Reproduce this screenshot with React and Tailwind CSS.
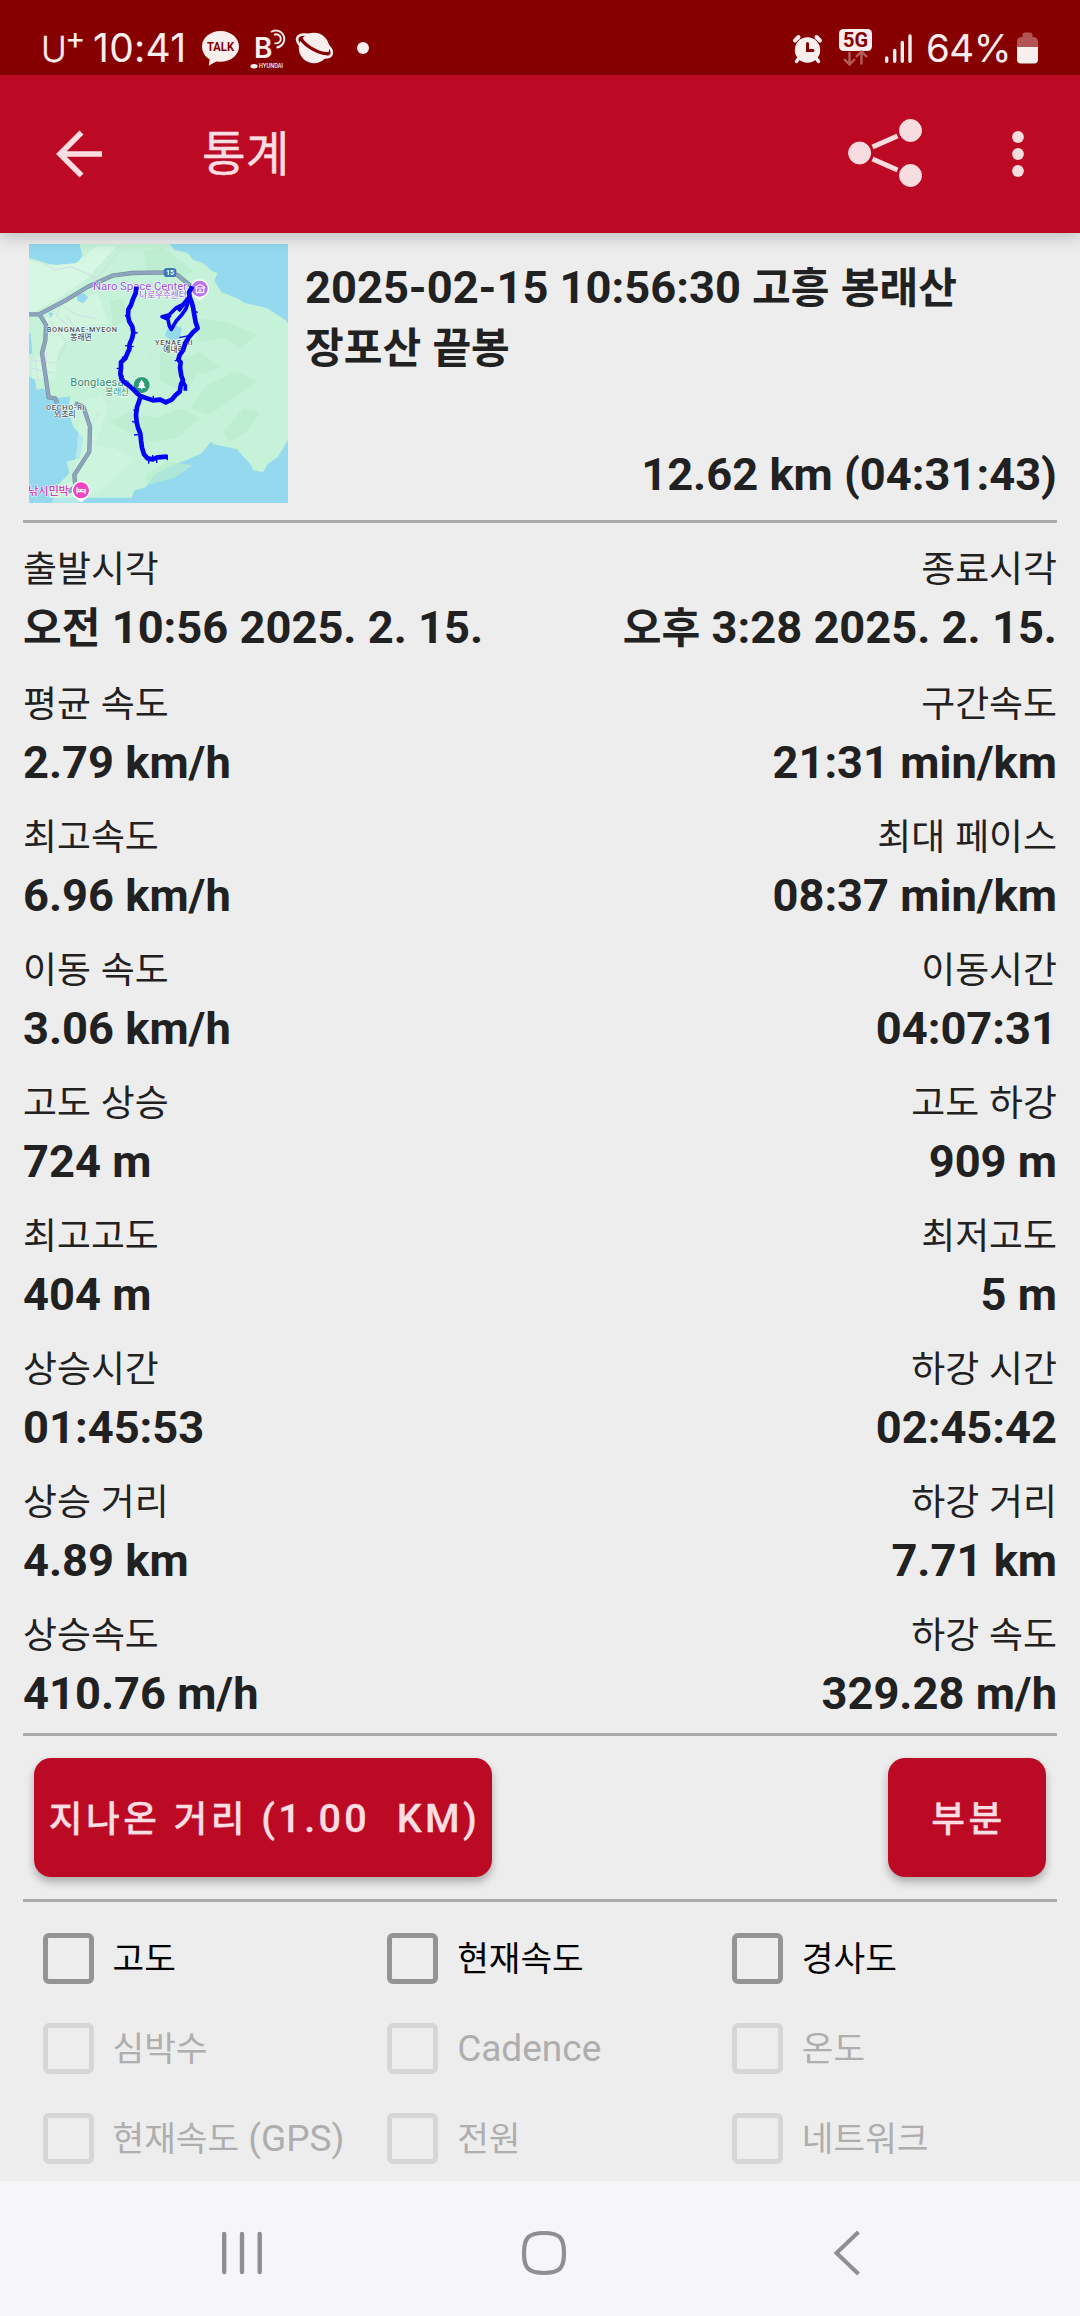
import React, { useState } from 'react';

const STATS = [
    [['출발시각', '오전 10:56 2025. 2. 15.'], ['종료시각', '오후 3:28 2025. 2. 15.']],
    [['평균 속도', '2.79 km/h'], ['구간속도', '21:31 min/km']],
    [['최고속도', '6.96 km/h'], ['최대 페이스', '08:37 min/km']],
    [['이동 속도', '3.06 km/h'], ['이동시간', '04:07:31']],
    [['고도 상승', '724 m'], ['고도 하강', '909 m']],
    [['최고고도', '404 m'], ['최저고도', '5 m']],
    [['상승시간', '01:45:53'], ['하강 시간', '02:45:42']],
    [['상승 거리', '4.89 km'], ['하강 거리', '7.71 km']],
    [['상승속도', '410.76 m/h'], ['하강 속도', '329.28 m/h']],
];

const OPTIONS = [
    { label: '고도', enabled: true },
    { label: '현재속도', enabled: true },
    { label: '경사도', enabled: true },
    { label: '심박수', enabled: false },
    { label: 'Cadence', enabled: false },
    { label: '온도', enabled: false },
    { label: '현재속도 (GPS)', enabled: false },
    { label: '전원', enabled: false },
    { label: '네트워크', enabled: false },
];

// Hangul glyphs run a little large next to Roboto, so they are set slightly smaller
const Txt = ({ children }) =>
    children.split(/([가-힣]+)/).map((part, i) =>
        /[가-힣]/.test(part) ? (
            <span key={i} className="text-[0.93em] leading-none">{part}</span>
        ) : (
            part
        )
    );

const StatusBar = () => (
    <div className="flex h-[75px] shrink-0 justify-between bg-[#870000] text-[#f8eeee]">
        <div className="flex pl-[41px]">
            <span className="w-[24px] pt-[30px] font-['Inter'] text-[35px] leading-[38px] font-light [-webkit-text-stroke:0.4px]">U</span>
            <span className="w-[28px] pt-[22px] font-['Inter'] text-[31px] leading-[32px]">+</span>
            <span className="w-[100px] pt-[28px] font-['Inter'] text-[39px] leading-[40px] tracking-[0.3px]">10:41</span>
            {/* Messenger */}
            <svg className="h-[75px] w-[48px]" viewBox="193 0 48 75" fill="currentColor">
                <path d="M220.500 31c-10.400 0-18.500 6.900-18.500 15.500 0 5.600 3.100 10.200 7.700 13l-1 6.200 7.500-4.300c1.400.3 2.800.4 4.300.4 10.400 0 18.500-6.700 18.500-15.300S230.900 31 220.500 31z" />
                <text x="220.500" y="51" textAnchor="middle" fontFamily="Roboto" fontWeight="700" fontSize="13.500" fill="#870000" textLength="27" lengthAdjust="spacingAndGlyphs">TALK</text>
            </svg>
            {/* Bluelink */}
            <svg className="h-[75px] w-[50px]" viewBox="241 0 50 75" fill="none" stroke="currentColor">
                <text x="254" y="57.500" fontFamily="Inter" fontWeight="600" fontSize="28" fill="currentColor" stroke="none">B</text>
                <path d="M271 32a8.500 8.500 0 1 1 5.500 15.500" strokeWidth="1.900" />
                <path d="M274 35a4.500 4.500 0 1 1 .5 8" strokeWidth="1.900" />
                <ellipse cx="254" cy="66.200" rx="3.500" ry="2.200" fill="currentColor" stroke="none" />
                <text x="259" y="68.300" fontFamily="Inter" fontWeight="600" fontSize="5.500" fill="currentColor" stroke="none" textLength="24" lengthAdjust="spacingAndGlyphs">HYUNDAI</text>
            </svg>
            {/* Planet */}
            <svg className="h-[75px] w-[50px]" viewBox="291 0 50 75" fill="none">
                <circle cx="314" cy="48" r="15.200" fill="currentColor" />
                <g transform="translate(314.500 46) rotate(27)">
                    <path d="M-16.500-2.500A17.500 6.500 0 0 0 16.500 0" stroke="#870000" strokeWidth="3.200" />
                    <ellipse rx="19" ry="8.500" stroke="currentColor" strokeWidth="2.600" />
                </g>
            </svg>
            <svg className="h-[75px] w-[30px]" viewBox="341 0 30 75">
                <circle cx="363" cy="48" r="6" fill="currentColor" />
            </svg>
        </div>

        <div className="flex pr-[38px]">
            {/* Alarm */}
            <svg className="h-[75px] w-[40px]" viewBox="790 0 40 75" fill="none" stroke="currentColor" strokeLinecap="round">
                <circle cx="807.500" cy="50" r="12.700" fill="currentColor" stroke="none" />
                <path d="M795 40.500l3.500-3.500M820 40.500l-3.500-3.500" strokeWidth="4" />
                <path d="M799 58l-2.500 3.500M816 58l2.500 3.500" strokeWidth="3.500" />
                <path d="M807.500 43.500v7h5.500" stroke="#870000" strokeWidth="3" />
            </svg>
            {/* 5G with data arrows */}
            <svg className="h-[75px] w-[50px]" viewBox="830 0 50 75">
                <rect x="839" y="29" width="33" height="22" rx="4.500" fill="currentColor" />
                <text x="855.500" y="47" textAnchor="middle" fontFamily="Roboto" fontWeight="700" fontSize="20" fill="#870000">5G</text>
                <path d="M849.500 52v12M844 59l5.500 5.500 5.500-5.500M861.500 64.500V52.500M856 57l5.500-5.500 5.500 5.500" fill="none" stroke="#b45c5c" strokeWidth="2.400" />
            </svg>
            {/* Signal */}
            <svg className="h-[75px] w-[46px]" viewBox="880 0 46 75" stroke="currentColor" strokeWidth="3.400" strokeLinecap="round">
                <path d="M886.700 58v3.200M894.700 50.500v10.700M902.300 42.500v18.700M910 36v25.200" />
            </svg>
            <span className="w-[88px] pt-[28px] font-['Inter'] text-[38.5px] leading-[40px] tracking-[-0.5px]">64%</span>
            <svg className="h-[75px] w-[28px]" viewBox="1014 0 28 75">
                <path d="M1022.500 37v-2a2.500 2.500 0 0 1 2.500-2.500h5a2.500 2.500 0 0 1 2.500 2.500v2h1a4.500 4.500 0 0 1 4.500 4.500V48h-21v-6.500a4.500 4.500 0 0 1 4.500-4.500z" fill="#b35454" />
                <path d="M1017 47h21v12.500a4 4 0 0 1-4 4h-13a4 4 0 0 1-4-4z" fill="currentColor" />
            </svg>
        </div>
    </div>
);

const AppBar = () => (
    <header className="relative z-10 flex h-[158px] shrink-0 items-center bg-[#bd0a24] text-[#fbdde2] shadow-[0_4px_16px_rgba(0,0,0,0.2)]">
        <button className="ml-[51px] flex" aria-label="Back">
            <svg className="h-[56px] w-[56px]" viewBox="0 0 56 56" fill="none" stroke="currentColor" strokeWidth="5.600">
                <path d="M51 28H9M30.500 6.500L9 28l21.500 21.500" />
            </svg>
        </button>
        <h1 className="ml-[95px] pt-[3px] text-[47.5px] leading-none [-webkit-text-stroke:0.4px]">통계</h1>
        <div className="ml-auto flex items-center pr-[46px]">
            <button className="flex" aria-label="Share">
                <svg className="h-[80px] w-[80px]" viewBox="845 114 80 80" fill="#f7dce0" stroke="#f7dce0">
                    <circle cx="859.600" cy="153" r="11" />
                    <circle cx="910.500" cy="130.500" r="11" />
                    <circle cx="910.500" cy="175.500" r="11" />
                    <path d="M872.500 147l25-11M872.500 159l25 11" strokeWidth="5" />
                </svg>
            </button>
            <button className="ml-[77px] flex" aria-label="More">
                <svg className="h-[56px] w-[32px]" viewBox="0 0 32 56" fill="#f7dce0">
                    <circle cx="16" cy="11" r="5.900" />
                    <circle cx="16" cy="28" r="5.900" />
                    <circle cx="16" cy="45" r="5.900" />
                </svg>
            </button>
        </div>
    </header>
);

const TrackMap = () => (
    <svg className="h-[259px] w-[259px] shrink-0" viewBox="27 27 777 777" fontFamily="'Roboto', 'Noto Sans CJK KR', sans-serif">
        <rect x="27" y="27" width="777" height="777" fill="#94d9ee" />
        {/* Land */}
        <path
            fill="#c5f2d8"
            d="M27 70l25 5 35 12 50 5 35-8 15-22-8-35h270l15 18 38 8 18 22 30 10 25 22 18 8-10 22 22 35 50 20 20 12 65 15 55 35 25 30 30 10 5 25-28 12-8 30 15 30 15 20v175l-40 20-35 60-30 20-15 25-28-5-10-18-40-45-70-15-8-8-28 35-45 20-50 18-45 25-30 40-32 8-8 22H88l-5-28 30-10 35-35-8-35 40-10 10-60-30-35-15-45 5-45-55 5-25-30-20 5-5-30-33-20V365l25-10-5-60-20-12z"
        />
        <path fill="#d5f7e3" d="M27 75l60 15 80-5 60-50h60l-80 90-90 65-90 50z" />
        <path fill="#d5f7e3" d="M75 250l80-60 80-15 30 90-90 10-60 70-10 90-68-5V370l30-10z" opacity=".7" />
        <path fill="#d5f7e3" d="M185 500l60-20 20 40-40 110 60 10 60 30-90 90-80 44H95l20-45 45-25z" opacity=".5" />
        {/* Hill shading */}
        <path
            fill="#b9edd0"
            opacity=".7"
            d="M370 50l60-12 90 70-30 20-50-30-60 15zM540 250l80 10 90 40-50 40-40-30-90 10zM420 350l60 20 60-20 60 50-70 20-30 50-80-30zM560 450l90-40 60 30-60 40-80 60-60-20zM270 560l60-30 80 20 70-30 60 30-70 60-90 10zM610 590l60-70 50 10-40 60-50 30zM380 720l60-40 80 10-60 40-80 20zM270 200l40-10 10 60-40 30z"
        />
        <path fill="#94d9ee" d="M27 27h150l5 30-30 28-45 5-50-25-30 5zM170 180l20-5 15 12-15 18-17-8zM440 285l15-18 30 12-5 30-25 8-20-15zM85 232l15 3-8 15z" />
        {/* Minor roads */}
        <path
            fill="none"
            stroke="#d0dce6"
            strokeWidth="3"
            d="M60 80l45 25 50-10 75 35 50-60 30-35M205 115l30 30M110 200l60 40 55 10M130 185l-20 60 40 30M90 260l50 60-30 60M140 240l30 50M27 375l85 10M35 400l70 15M45 370l10 70M80 350l-5 80M390 365l45-60M240 530l-40 60"
        />
        {/* Main road */}
        <g fill="none" strokeLinejoin="round">
            <path d="M27 238h30l80-42 65-40 75-34 60-8 100-2 35 8 50 40M60 240l18 30-2 45-10 40 8 50 12 82 20 3 5 15M165 505l25 10 20 60-2 75-45 70 3 35-20 15" stroke="#76909f" strokeWidth="13" />
            <path d="M27 238h30l80-42 65-40 75-34 60-8 100-2 35 8 50 40M60 240l18 30-2 45-10 40 8 50 12 82 20 3 5 15M165 505l25 10 20 60-2 75-45 70 3 35-20 15" stroke="#8fa5bf" strokeWidth="9" />
        </g>
        <rect x="431" y="99" width="38" height="27" rx="10" fill="#3f77b5" />
        <text x="450" y="120" textAnchor="middle" fontSize="21" fontWeight="700" fill="#fff">15</text>

        {/* Place names */}
        <g paintOrder="stroke" stroke="#fff" strokeWidth="3" strokeLinejoin="round">
            <text x="219" y="165" fontSize="34" textLength="282" fill="#a04fe8">Naro Space Center</text>
            <text x="358" y="190" fontSize="26" textLength="142" fill="#a04fe8">나로우주센터</text>
            <text x="80" y="292" fontSize="22" fontWeight="500" textLength="211" fill="#4c5155">BONGNAE-MYEON</text>
            <text x="151" y="314" fontSize="23" fontWeight="500" textLength="64" fill="#4c5155">봉래면</text>
            <text x="405" y="329" fontSize="22" fontWeight="500" textLength="113" fill="#4c5155">YENAE-RI</text>
            <text x="430" y="350" fontSize="23" fontWeight="500" textLength="64" fill="#4c5155">예내리</text>
            <text x="78" y="525" fontSize="22" fontWeight="500" textLength="116" fill="#4c5155">OECHO-RI</text>
            <text x="103" y="546" fontSize="23" fontWeight="500" textLength="64" fill="#4c5155">외초리</text>
            <text x="151" y="454" fontSize="33" textLength="178" fill="#248c6e">Bonglaesan</text>
            <text x="256" y="479" fontSize="26" textLength="71" fill="#248c6e">봉래산</text>
            <text x="24" y="781" fontSize="34" fontWeight="500" textLength="123" fill="#cf40b8">낚시민박</text>
        </g>

        {/* Pins */}
        <path d="M539 133a28 28 0 0 1 17 50l-17 15-17-15a28 28 0 0 1 17-50z" fill="#fff" />
        <circle cx="539" cy="161" r="24" fill="#b471f0" />
        <path d="M527 156l13-8 13 8v3h-26zM529 160v13h22v-13" fill="none" stroke="#fff" strokeWidth="3.500" />
        <path d="M537 173v-8h6v8" fill="none" stroke="#fff" strokeWidth="3" />
        <circle cx="365" cy="450" r="27" fill="#e4f8ee" />
        <circle cx="365" cy="450" r="24" fill="#2a9d78" />
        <path d="M365 434l9 14-3 1 6 10h-10v4h-4v-4h-10l6-10-3-1z" fill="#fff" />
        <path d="M183 738a28 28 0 0 1 17 50l-17 15-17-15a28 28 0 0 1 17-50z" fill="#fff" />
        <circle cx="183" cy="766" r="24" fill="#ee45c0" />
        <path d="M171 756v20M171 770h24v6M195 770v-6h-13v6" fill="none" stroke="#fff" strokeWidth="4" />
        <circle cx="176.500" cy="764" r="3" fill="#fff" />

        {/* Recorded track */}
        <g fill="none" stroke="#0505f5" strokeLinejoin="round">
            <path
                strokeWidth="14"
                d="M349 155l-2 20-8 17-6 18-8 14-1 18 4 18 9 15 3 18-4 18-7 16-1 16-6 12-6 15-13 12v18l-2 14 3 16 7 10 14 10 16 14 8 9 12 10 20 7 18 6 22-2 16 8 18-8 12-14 12-10 4-22 6-12-5-14-4-24 2-16-7-8 4-14 10-14 8-24 10-16 12-14 14-12-6-18-4-22-4-24-4-14-6-16-2-14 10-18"
            />
            <path strokeWidth="14" d="M362 482l-5 18-6 16-3 24 2 22 4 16 7 18 2 20 3 22 6 20 10 12 16 3 14-6 30-2" />
            <path strokeWidth="11" d="M508 185l-20 24-20 10-20 20-22 6 18 8 4 20 6 10 14-24 16-18 14-20 8-24M450 240l-8 12M505 190l-30 38M486 436l10 16v15" />
            <path strokeWidth="4" d="M325 240l-10 3M340 292l13 2M315 332l26 3M308 398l-18 3M306 368l14-8M296 420l16 4M336 560l16 2M342 600l18-2M340 525l14 4M478 308l28-6M520 228l14 4M464 378l14-6M474 470l12 2M386 670v16M398 660v14M410 668v16M442 660v16M372 486l-24-14M400 482v16M440 494v14" />
        </g>
    </svg>
);

const Stat = ({ label, value, right }) => (
    <div className={right ? 'text-right' : 'text-left'}>
        <div className="h-[57px] text-[39.7px] leading-[55px] whitespace-nowrap"><Txt>{label}</Txt></div>
        <div className="h-[60px] text-[45.25px] leading-[60px] font-bold whitespace-nowrap"><Txt>{value}</Txt></div>
    </div>
);

const Divider = () => <div className="h-[3px] bg-[#aaaaaa]" />;

const Option = ({ label, enabled, checked, onToggle }) => (
    <button
        role="checkbox"
        aria-checked={checked}
        disabled={!enabled}
        onClick={onToggle}
        className={`flex h-[90px] items-center pl-[19.5px] whitespace-nowrap ${enabled ? 'text-black' : 'text-[#aeaeae]'}`}
    >
        <span
            className={`size-[51px] shrink-0 rounded-[6px] border-[5.5px] ${enabled ? 'border-[#949494]' : 'border-[#d6d6d6]'} ${checked ? 'bg-[#bd0a24]' : ''}`}
        />
        <span className="ml-[19px] pt-[2px] text-[37px] leading-[48px]"><Txt>{label}</Txt></span>
    </button>
);

const NavBar = () => (
    <nav className="flex h-[135px] shrink-0 items-center justify-between bg-[#f6f6f8] px-[214px] pt-[9px] text-[#8f8f91]">
        <svg className="h-[56px] w-[56px]" viewBox="0 0 56 56" stroke="currentColor" strokeWidth="4.400" strokeLinecap="round">
            <path d="M10.200 9v38M28 9v38M45.700 9v38" />
        </svg>
        <svg className="ml-[7px] h-[56px] w-[56px]" viewBox="0 0 56 56" fill="none" stroke="currentColor" strokeWidth="4.200">
            <path d="M28 8c15.500 0 20 4.500 20 20s-4.500 20-20 20S8 43.500 8 28 12.500 8 28 8z" />
        </svg>
        <svg className="h-[56px] w-[56px]" viewBox="0 0 56 56" fill="none" stroke="currentColor" strokeWidth="4">
            <path d="M48.500 7l-22 21 22 21" />
        </svg>
    </nav>
);

export default function App() {
    const [checked, setChecked] = useState({});

    const toggle = (label) => setChecked((prev) => ({ ...prev, [label]: !prev[label] }));

    return (
        <div className="flex h-[2316px] w-[1080px] flex-col overflow-hidden bg-[#ededed] font-['Roboto','Noto_Sans_CJK_KR',sans-serif] text-[#212121]">
            <StatusBar />
            <AppBar />

            <main className="min-h-0 flex-1 px-[23px] pt-[11px]">
                {/* Activity summary */}
                <section className="flex h-[276px] pl-[6px]">
                    <TrackMap />
                    <div className="flex flex-1 flex-col justify-between pb-[15px] pl-[17px]">
                        <h2 className="pt-[14px] text-[45.25px] leading-[60px] font-bold">
                            <Txt>2025-02-15 10:56:30 고흥 봉래산</Txt>
                            <br />
                            <Txt>장포산 끝봉</Txt>
                        </h2>
                        <p className="text-right text-[45.25px] leading-[60px] font-bold">12.62 km (04:31:43)</p>
                    </div>
                </section>
                <Divider />

                {/* Statistics */}
                <section className="flex h-[1210px] flex-col gap-[16px] pt-[18px]">
                    {STATS.map(([left, right], i) => (
                        <div key={left[0]} className={`flex justify-between ${i === 0 ? 'pb-[2px]' : ''}`}>
                            <Stat label={left[0]} value={left[1]} />
                            <Stat label={right[0]} value={right[1]} right />
                        </div>
                    ))}
                </section>
                <Divider />

                {/* Actions */}
                <section className="flex h-[163px] justify-between px-[11px] pt-[22px] text-[39.5px] font-medium text-[#fbdde2]">
                    <button className="h-[119px] w-[458px] rounded-[17px] bg-[#bd0a24] pt-[2px] pl-[3px] tracking-[3.4px] whitespace-pre shadow-[0_5px_9px_rgba(0,0,0,0.28)] [-webkit-text-stroke:0.3px]">
                        <Txt>{'지나온 거리 (1.00  KM)'}</Txt>
                    </button>
                    <button className="h-[119px] w-[158px] rounded-[17px] bg-[#bd0a24] pt-[2px] pl-[3px] tracking-[3.4px] shadow-[0_5px_9px_rgba(0,0,0,0.28)] [-webkit-text-stroke:0.3px]">
                        <Txt>부분</Txt>
                    </button>
                </section>
                <Divider />

                {/* Chart series */}
                <section className="grid grid-cols-3 pt-[11px]">
                    {OPTIONS.map(({ label, enabled }) => (
                        <Option
                            key={label}
                            label={label}
                            enabled={enabled}
                            checked={!!checked[label]}
                            onToggle={() => toggle(label)}
                        />
                    ))}
                </section>
            </main>

            <NavBar />
        </div>
    );
}
